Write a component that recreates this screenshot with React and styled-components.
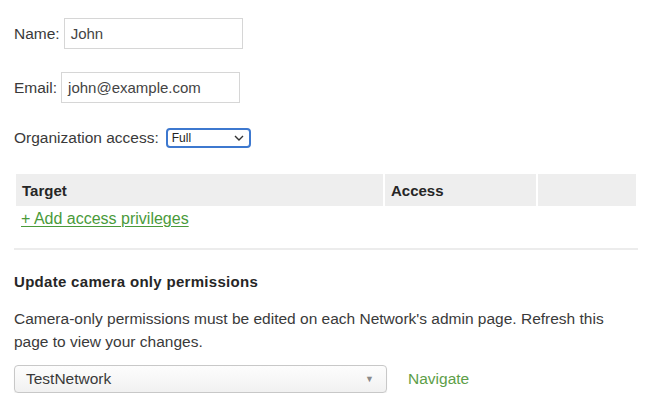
import React from "react";
import styled, { createGlobalStyle } from "styled-components";

const Global = createGlobalStyle`
  html, body { margin: 0; padding: 0; background: #fff; }
  body { font-family: "Liberation Sans", Arial, sans-serif; color: #3a3a3a; }
`;

const Page = styled.div`
  width: 624px;
  padding: 18px 12px 0 14px;
`;

const Field = styled.div`
  display: flex;
  align-items: center;
  gap: 4px;
  margin-top: ${(p) => p.$top || 0}px;
  font-size: 15.5px;
  color: #3a3a3a;
`;

const TextInput = styled.div`
  box-sizing: border-box;
  width: ${(p) => p.$w}px;
  height: 31px;
  border: 1px solid #d6d6d6;
  padding: 0 6px;
  display: flex;
  align-items: center;
  font-size: 15px;
  color: #444;
  background: #fff;
`;

const MiniSelect = styled.div`
  box-sizing: border-box;
  width: 85px;
  height: 20px;
  border: 2px solid #3d78cf;
  border-radius: 4px;
  padding: 0 5px 0 4px;
  display: flex;
  align-items: center;
  justify-content: space-between;
  font-size: 12px;
  color: #222;
  margin-left: 3px;
`;

const Table = styled.table`
  margin-top: 24px;
  width: 624px;
  border-spacing: 2px;
  border-collapse: separate;
`;

const Th = styled.th`
  width: ${(p) => p.$w}px;
  height: 32px;
  padding: 0 6px;
  background: #eeeeee;
  text-align: left;
  font-size: 15px;
  font-weight: bold;
  color: #262626;
  box-sizing: border-box;
`;

const Td = styled.td`
  padding: 1px 5px 0;
`;

const GreenLink = styled.a`
  font-size: 16px;
  line-height: 20px;
  color: #4a9a3a;
  text-decoration: underline;
  text-underline-offset: 2px;
  cursor: pointer;
`;

const Divider = styled.div`
  margin-top: 17px;
  border-top: 2px solid #ececec;
`;

const Heading = styled.h3`
  margin: 23px 0 0;
  font-size: 15px;
  line-height: 18px;
  font-weight: bold;
  letter-spacing: 0.3px;
  color: #262626;
`;

const Para = styled.p`
  margin: 16px 0 0;
  font-size: 15.5px;
  line-height: 23px;
  color: #3a3a3a;
`;

const NetRow = styled.div`
  display: flex;
  align-items: center;
  gap: 21px;
  margin-top: 12px;
`;

const NetSelect = styled.div`
  box-sizing: border-box;
  width: 373px;
  height: 28px;
  border: 1px solid #c8c8c8;
  border-radius: 4px;
  background: linear-gradient(#fdfdfd, #f1f1f1);
  box-shadow: 0 1px 1px rgba(0, 0, 0, 0.08);
  display: flex;
  align-items: center;
  justify-content: space-between;
  padding: 0 12px 0 11px;
  font-size: 15.5px;
  color: #3a3a3a;
`;

const Arrow = styled.span`
  font-size: 9px;
  color: #8a8a8a;
`;

const Navigate = styled.a`
  font-size: 15.5px;
  color: #5d9e48;
  cursor: pointer;
`;

export default function App() {
  return (
    <>
      <Global />
      <Page>
        <Field>
          Name: <TextInput $w={179}>John</TextInput>
        </Field>
        <Field $top={23}>
          Email: <TextInput $w={179}>john@example.com</TextInput>
        </Field>
        <Field $top={25}>
          Organization access:
          <MiniSelect>
            <span>Full</span>
            <svg width="10" height="6" viewBox="0 0 10 6">
              <path d="M1 1l4 4 4-4" fill="none" stroke="#333" strokeWidth="1.4" />
            </svg>
          </MiniSelect>
        </Field>
        <Table>
          <thead>
            <tr>
              <Th $w={367}>Target</Th>
              <Th $w={151}>Access</Th>
              <Th $w={98}></Th>
            </tr>
          </thead>
          <tbody>
            <tr>
              <Td colSpan={3}>
                <GreenLink>+ Add access privileges</GreenLink>
              </Td>
            </tr>
          </tbody>
        </Table>
        <Divider />
        <Heading>Update camera only permissions</Heading>
        <Para>
          Camera-only permissions must be edited on each Network's admin page. Refresh this
          page to view your changes.
        </Para>
        <NetRow>
          <NetSelect>
            <span>TestNetwork</span>
            <Arrow>▼</Arrow>
          </NetSelect>
          <Navigate>Navigate</Navigate>
        </NetRow>
      </Page>
    </>
  );
}
